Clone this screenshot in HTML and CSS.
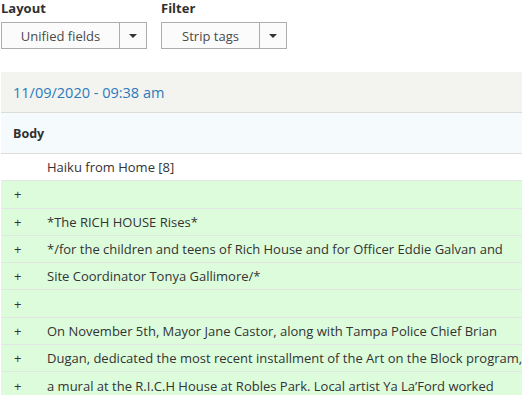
FILE: index.html
```html
<!DOCTYPE html>
<html lang="en">
<head>
    <meta charset="UTF-8">
    <meta name="viewport" content="width=device-width, initial-scale=1.0">
    <title>Revision diff</title>
    <link rel="stylesheet" href="styles.css">
</head>
<body>
    <div class="controls">
        <div class="control">
            <label class="control-label">Layout</label>
            <div class="split-btn layout-btn">
                <span class="split-main">Unified fields</span>
                <span class="split-caret"><span class="caret"></span></span>
            </div>
        </div>
        <div class="control">
            <label class="control-label">Filter</label>
            <div class="split-btn filter-btn">
                <span class="split-main">Strip tags</span>
                <span class="split-caret"><span class="caret"></span></span>
            </div>
        </div>
    </div>

    <!-- Revision diff -->
    <div class="revision">
        <div class="revision-date">11/09/2020 - 09:38 am</div>
        <div class="field-name">Body</div>
        <div class="diff-row">
            <span class="marker"></span>
            <span class="line">Haiku from Home [8]</span>
        </div>
        <div class="diff-row added">
            <span class="marker">+</span>
            <span class="line"></span>
        </div>
        <div class="diff-row added">
            <span class="marker">+</span>
            <span class="line">*The RICH HOUSE Rises*</span>
        </div>
        <div class="diff-row added">
            <span class="marker">+</span>
            <span class="line">*/for the children and teens of Rich House and for Officer Eddie Galvan and</span>
        </div>
        <div class="diff-row added">
            <span class="marker">+</span>
            <span class="line">Site Coordinator Tonya Gallimore/*</span>
        </div>
        <div class="diff-row added">
            <span class="marker">+</span>
            <span class="line"></span>
        </div>
        <div class="diff-row added">
            <span class="marker">+</span>
            <span class="line">On November 5th, Mayor Jane Castor, along with Tampa Police Chief Brian</span>
        </div>
        <div class="diff-row added">
            <span class="marker">+</span>
            <span class="line">Dugan, dedicated the most recent installment of the Art on the Block program,</span>
        </div>
        <div class="diff-row added">
            <span class="marker">+</span>
            <span class="line">a mural at the R.I.C.H House at Robles Park. Local artist Ya La’Ford worked</span>
        </div>
    </div>
</body>
</html>
```

FILE: styles.css
```css
body {
    margin: 0;
    padding: 0 0 0 1px;
    font-family: "Open Sans", "Noto Sans", Arial, sans-serif;
    color: #333;
    background-color: white;
    overflow: hidden;
}
.controls {
    display: flex;
    gap: 14px;
}
.control-label {
    display: block;
    font-size: 13px;
    font-weight: bold;
    color: #303030;
    line-height: 16px;
    margin-bottom: 6px;
}
.split-btn {
    display: flex;
    height: 27px;
    box-sizing: border-box;
    border: 1px solid #adadad;
    background-color: #fbfbfb;
    font-size: 13px;
}
.layout-btn {
    width: 146px;
}
.filter-btn {
    width: 126px;
}
.split-main {
    flex: 1;
    display: flex;
    align-items: center;
    justify-content: center;
    color: #4a4a4a;
}
.split-caret {
    width: 26px;
    border-left: 1px solid #adadad;
    display: flex;
    align-items: center;
    justify-content: center;
}
.caret {
    width: 0;
    height: 0;
    border-left: 4px solid transparent;
    border-right: 4px solid transparent;
    border-top: 4px solid #333;
}
.revision {
    margin-top: 23px;
}
.revision-date {
    height: 41px;
    box-sizing: border-box;
    padding-left: 12px;
    display: flex;
    align-items: center;
    background-color: #f3f3ef;
    border-bottom: 1px solid #dcdcd8;
    color: #2b7bbd;
    font-size: 14.5px;
}
.field-name {
    height: 41px;
    box-sizing: border-box;
    padding-left: 12px;
    display: flex;
    align-items: center;
    background-color: #f5fafd;
    border-bottom: 1px solid #dddddd;
    font-size: 12.5px;
    font-weight: bold;
    color: #303030;
}
.diff-row {
    display: flex;
    align-items: center;
    height: 27.3px;
    box-sizing: border-box;
    border-bottom: 1px solid #e2e6e2;
    font-size: 13px;
    color: #333;
}
.diff-row.added {
    background-color: #ddfcdc;
}
.marker {
    width: 46px;
    padding-left: 13px;
    box-sizing: border-box;
    flex-shrink: 0;
}
.line {
    white-space: nowrap;
}
```
